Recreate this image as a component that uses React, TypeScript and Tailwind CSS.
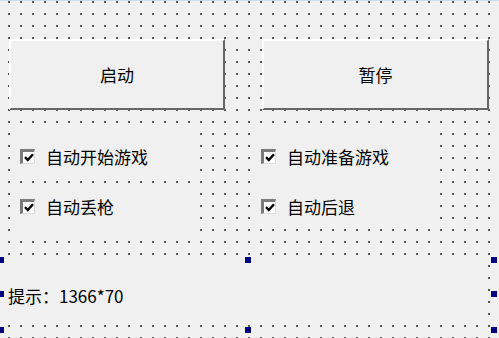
const font = { fontFamily: '"Noto Sans CJK SC", "Noto Sans", sans-serif' };

function Button({ label, w }: { label: string; w: string }) {
  return (
    <div
      className={`${w} h-[71px] flex items-center justify-center bg-[#f0f0f0] border-2 border-t-white border-l-white border-r-[#666] border-b-[#666] text-[17px] text-black`}
    >
      {label}
    </div>
  );
}

function Check({ label }: { label: string }) {
  return (
    <div className="flex items-center h-[20px] gap-[11px]">
      <div className="w-[15px] h-[15px] flex items-center justify-center bg-white border-t-[3px] border-l-[3px] border-r border-b border-t-[#7a7a7a] border-l-[#7a7a7a] border-r-[#dcdcdc] border-b-[#dcdcdc]">
        <svg width="10" height="9" viewBox="0 0 10 9">
          <path d="M1 4.2 L3.8 7 L9 1.2" stroke="#000" strokeWidth="2.4" fill="none" />
        </svg>
      </div>
      <span className="text-[17px] text-black leading-none">{label}</span>
    </div>
  );
}

function Handle({ pos }: { pos: string }) {
  return <div className={`absolute w-[6px] h-[6px] bg-[#000080] ${pos}`} />;
}

export default function App() {
  return (
    <div
      style={font}
      className="relative w-[499px] h-[338px] overflow-hidden bg-[#f0f0f0] bg-[radial-gradient(circle,#585858_0.8px,transparent_1.3px)] bg-[length:12px_12px] bg-[position:3px_-4px] shadow-[inset_0_1px_0_#cddcea]"
    >
      <div className="flex pt-[39px] pl-[9px] gap-[37px]">
        <Button label="启动" w="w-[216px]" />
        <Button label="暂停" w="w-[227px]" />
      </div>

      <div className="flex mt-[15px]">
        <div className="ml-[11px] w-[186px] flex flex-col">
          <div className="h-[53px] bg-[#f0f0f0] pt-[21px] pl-[9px]">
            <Check label="自动开始游戏" />
          </div>
          <div className="mt-[8px] h-[52px] bg-[#f0f0f0] pt-[10px] pl-[9px]">
            <Check label="自动丢枪" />
          </div>
        </div>
        <div className="ml-[57px] w-[183px] h-[101px] bg-[#f0f0f0] pt-[21px] pl-[7px] flex flex-col gap-[30px]">
          <Check label="自动准备游戏" />
          <Check label="自动后退" />
        </div>
      </div>

      <div className="relative mt-[20px] w-[486px] h-[64px] bg-[#f0f0f0] pt-[27px] pl-[8px]">
        <div className="flex items-center h-[20px] text-[17px] text-black leading-none">提示：1366*70</div>
        <Handle pos="left-[-2px] top-[-1px]" />
        <Handle pos="left-[-2px] top-[33px]" />
        <Handle pos="left-[-2px] top-[69px]" />
        <Handle pos="left-[245px] top-[-1px]" />
        <Handle pos="left-[245px] top-[69px]" />
        <Handle pos="left-[491px] top-[-1px]" />
        <Handle pos="left-[491px] top-[33px]" />
        <Handle pos="left-[491px] top-[69px]" />
      </div>
    </div>
  );
}
